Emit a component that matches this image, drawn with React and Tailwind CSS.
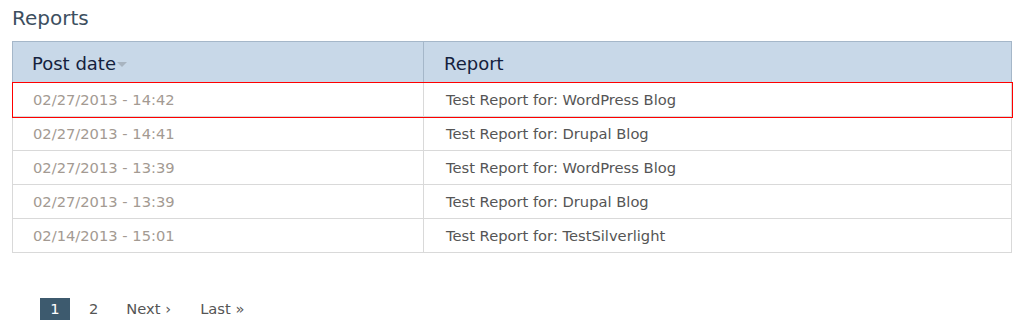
import React from 'react'

const rows = [
  { date: '02/27/2013 - 14:42', report: 'Test Report for: WordPress Blog', active: true },
  { date: '02/27/2013 - 14:41', report: 'Test Report for: Drupal Blog' },
  { date: '02/27/2013 - 13:39', report: 'Test Report for: WordPress Blog' },
  { date: '02/27/2013 - 13:39', report: 'Test Report for: Drupal Blog' },
  { date: '02/14/2013 - 15:01', report: 'Test Report for: TestSilverlight' },
]

const App = () => {
  return (
    <div className="bg-white w-[1033px] h-[336px] px-3 pt-[5px] font-['DejaVu_Sans',sans-serif]">
      <h2 className="text-[20px] leading-[26px] text-[#3d4f5f] mb-[10px]">Reports</h2>

      <table className="w-[1000px] border-collapse table-fixed">
        <thead>
          <tr className="bg-[#c8d8e8] h-[41px]">
            <th className="w-[411px] border border-[#a5b7c9] border-b-[#8aa0b8] text-left font-normal text-[18px] text-[#14213d] pl-[19px] pt-[2px]">
              Post date
              <span className="inline-block align-middle ml-[1px] w-0 h-0 border-l-[5px] border-r-[5px] border-t-[5px] border-l-transparent border-r-transparent border-t-[#a8b4c0]" />
            </th>
            <th className="border border-[#a5b7c9] border-b-[#8aa0b8] text-left font-normal text-[18px] text-[#14213d] pl-5 pt-[2px]">
              Report
            </th>
          </tr>
        </thead>
        <tbody>
          {rows.map((r, i) => (
            <tr
              key={i}
              className={`h-[34px] text-[14.7px] ${r.active ? 'outline outline-1 outline-[#ff0000]' : ''}`}
            >
              <td className="border border-[#d9d9d9] pl-5 pt-[1px] text-[#a39a92]">{r.date}</td>
              <td className="border border-[#d9d9d9] pl-[22px] pt-[1px] text-[#555555]">{r.report}</td>
            </tr>
          ))}
        </tbody>
      </table>

      <div className="flex items-center mt-[45px] ml-7 text-[14.7px]">
        <span className="w-[30px] h-[22px] flex items-center justify-center bg-[#3d5a6e] text-white">1</span>
        <span className="ml-[19px] text-[#555555]">2</span>
        <span className="ml-[28px] text-[#555555]">Next ›</span>
        <span className="ml-[29px] text-[#555555]">Last »</span>
      </div>
    </div>
  )
}

export default App
